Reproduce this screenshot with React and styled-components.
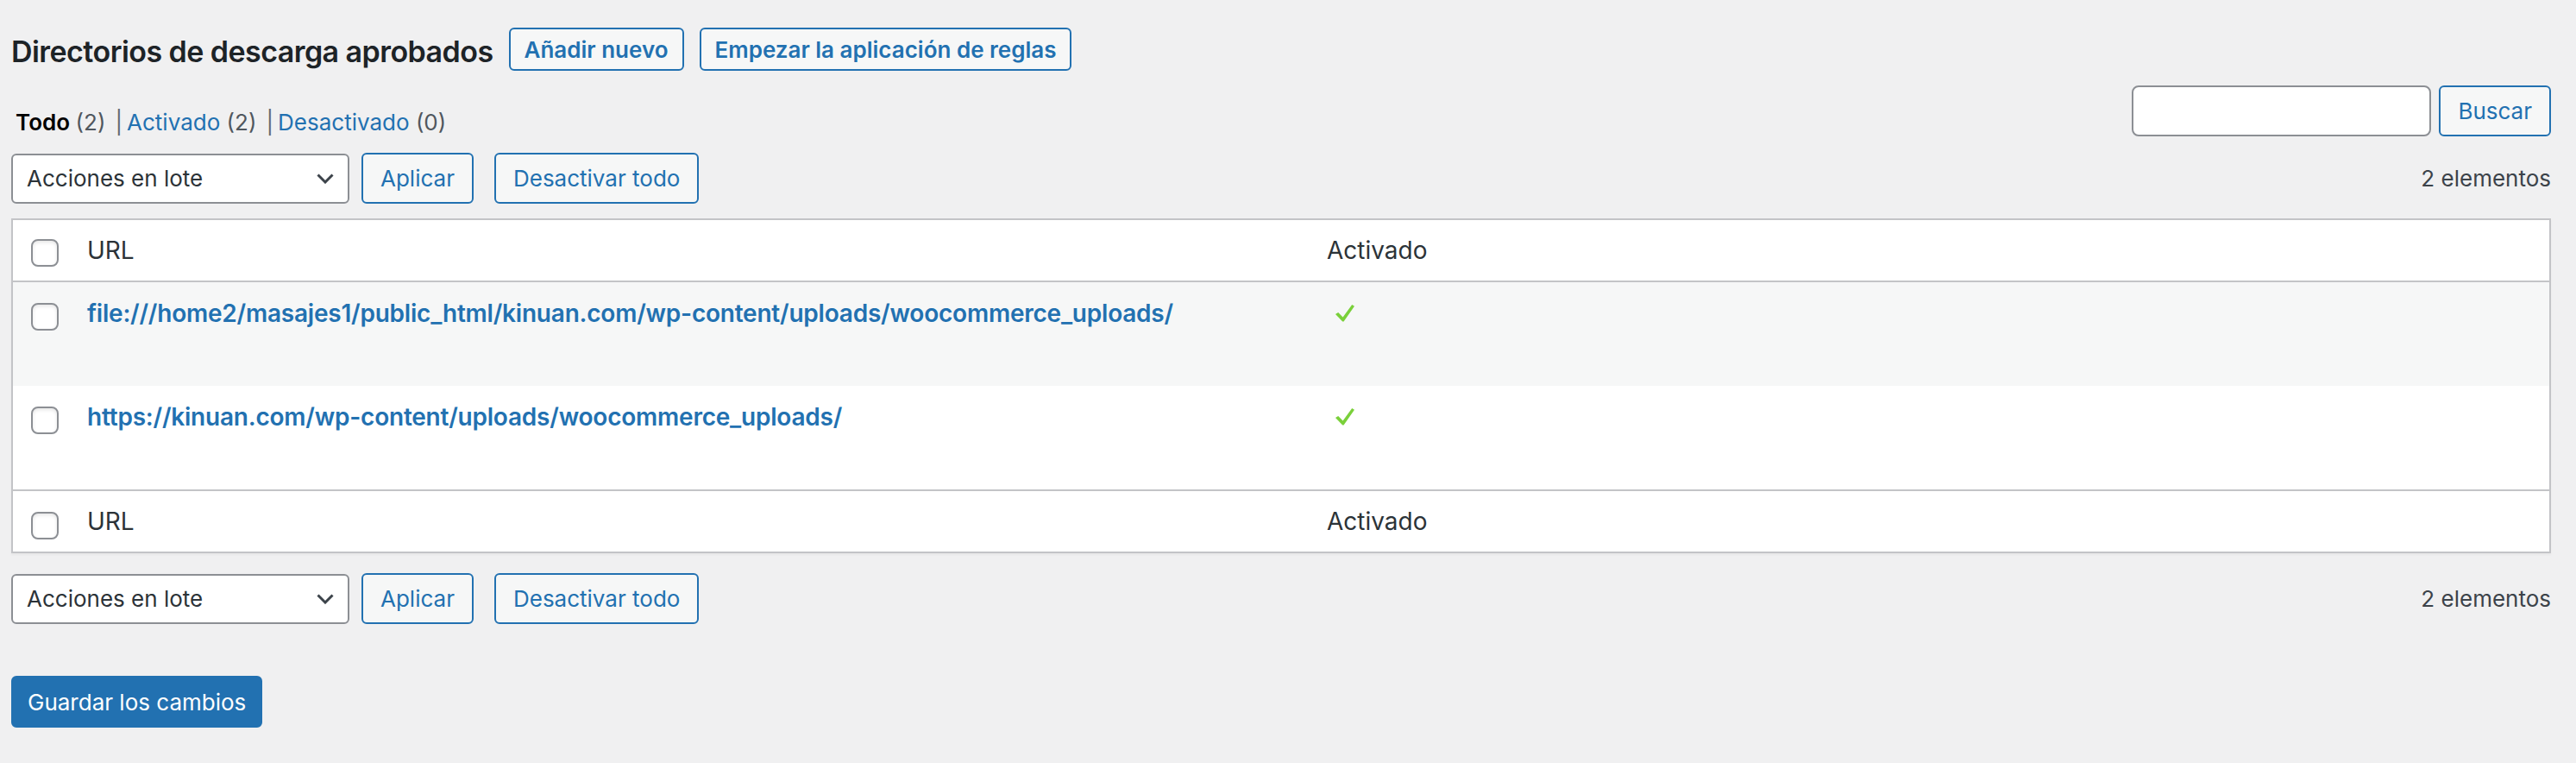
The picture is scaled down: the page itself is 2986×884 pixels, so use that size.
import React from "react";
import styled, { createGlobalStyle } from "styled-components";

const GlobalStyle = createGlobalStyle`
  html, body { margin: 0; padding: 0; background: #f0f0f1; }
  body {
    font-family: Inter, "Noto Sans", "Liberation Sans", sans-serif;
    font-size: 26px;
    color: #3c434a;
  }
  * { box-sizing: border-box; }
`;

const Wrap = styled.div`
  padding: 32px 29px 41px 13px;
`;

const TitleRow = styled.div`
  display: flex;
  align-items: flex-start;
  gap: 18px;
  height: 50px;
`;

const Title = styled.h2`
  margin: 0;
  padding-top: 6px;
  font-size: 34px;
  line-height: 44px;
  font-weight: 600;
  letter-spacing: -0.55px;
  color: #1d2327;
  white-space: nowrap;
`;

const PageAction = styled.button`
  height: 50px;
  padding: 0 16px;
  border: 2px solid #2271b1;
  border-radius: 6px;
  background: #f6f7f7;
  color: #2271b1;
  font-family: inherit;
  font-size: 26px;
  font-weight: 600;
  cursor: pointer;
  white-space: nowrap;
`;

const FilterBar = styled.div`
  display: flex;
  justify-content: space-between;
  align-items: flex-end;
  margin-top: 17px;
`;

const SubSub = styled.ul`
  display: flex;
  margin: 0;
  padding: 0 0 0 5px;
  list-style: none;
  line-height: 32px;
  color: #50575e;
`;

const SubItem = styled.li`
  display: flex;
  white-space: pre;
`;

const SubLink = styled.a`
  color: ${(p) => (p.$current ? "#000" : "#2271b1")};
  font-weight: ${(p) => (p.$current ? 600 : 400)};
  text-decoration: none;
`;

const Count = styled.span`
  color: #50575e;
  font-weight: 400;
`;

const Sep = styled.span`
  margin: 0 5px 0 11px;
  color: #646970;
`;

const SearchBox = styled.div`
  display: flex;
  gap: 9px;
`;

const SearchInput = styled.input`
  width: 347px;
  height: 59px;
  border: 2px solid #8c8f94;
  border-radius: 8px;
  background: #fff;
  padding: 0 16px;
  font-family: inherit;
  font-size: 26px;
  outline: none;
`;

const Button = styled.button`
  height: ${(p) => p.$h || 59}px;
  padding: 0 20px;
  margin-left: ${(p) => p.$ml || 0}px;
  border: 2px solid #2271b1;
  border-radius: 6px;
  background: #f6f7f7;
  color: #2271b1;
  font-family: inherit;
  font-size: 26px;
  font-weight: 400;
  cursor: pointer;
  white-space: nowrap;
`;

const PrimaryButton = styled(Button)`
  height: 60px;
  padding: 0 17px;
  background: #2271b1;
  color: #fff;
`;

const TableNav = styled.div`
  display: flex;
  align-items: center;
  margin-top: ${(p) => p.$mt}px;
`;

const Select = styled.div`
  width: 392px;
  height: 58px;
  border: 2px solid #8c8f94;
  border-radius: 6px;
  background: #fff;
  padding: 0 16px;
  display: flex;
  align-items: center;
  justify-content: space-between;
  color: #2c3338;
  font-size: 26px;
`;

const DisplayingNum = styled.span`
  margin-left: auto;
  color: #3c434a;
`;

const Table = styled.table`
  width: 100%;
  margin-top: 17px;
  border: 2px solid #c3c4c7;
  border-spacing: 0;
  border-collapse: separate;
  table-layout: fixed;
  background: #fff;
  box-shadow: 0 2px 2px rgba(0, 0, 0, 0.04);
`;

const HeadCell = styled.th`
  text-align: left;
  vertical-align: top;
  padding: 16px 20px;
  height: ${(p) => (p.$foot ? 70 : 72)}px;
  font-size: 28px;
  line-height: 38px;
  font-weight: 400;
  color: #2c3338;
  border-bottom: ${(p) => (p.$foot ? "none" : "2px solid #c3c4c7")};
  border-top: ${(p) => (p.$foot ? "2px solid #c3c4c7" : "none")};
`;

const CheckCell = styled.th`
  width: 66px;
  vertical-align: top;
  padding: ${(p) => p.$pt}px 0 0 21px;
  border-bottom: ${(p) => (p.$head ? "2px solid #c3c4c7" : "none")};
  border-top: ${(p) => (p.$foot ? "2px solid #c3c4c7" : "none")};
`;

const Check = styled.input.attrs({ type: "checkbox" })`
  appearance: none;
  display: block;
  margin: 0;
  width: 32px;
  height: 32px;
  border: 2px solid #8c8f94;
  border-radius: 8px;
  background: #fff;
  box-shadow: inset 0 2px 4px rgba(0, 0, 0, 0.1);
`;

const Row = styled.tr`
  height: 120px;
  background: ${(p) => (p.$alt ? "#f6f7f7" : "#fff")};
`;

const Cell = styled.td`
  vertical-align: top;
  padding: 15px 20px;
  font-size: 28px;
  line-height: 42px;
`;

const RowTitle = styled.a`
  color: #2271b1;
  font-weight: 600;
  letter-spacing: -0.22px;
  text-decoration: none;
`;

const YesIcon = styled.svg`
  display: block;
  margin: 11px 0 0 10px;
`;

const Footer = styled.div`
  margin-top: 60px;
`;

const Chevron = () => (
  <svg width="20" height="12" viewBox="0 0 20 12">
    <path d="M1.5 1.5 L10 10 L18.5 1.5" fill="none" stroke="#3c434a" strokeWidth="3" />
  </svg>
);

const Yes = () => (
  <YesIcon width="22" height="20" viewBox="0 0 22 20">
    <polygon points="0,11 3.2,9 8.6,14.6 19.2,0 22,1.8 9.6,19.6 8.2,19.6" fill="#7ad03a" />
  </YesIcon>
);

const BulkNav = ({ mt }) => (
  <TableNav $mt={mt}>
    <Select>
      <span>Acciones en lote</span>
      <Chevron />
    </Select>
    <Button $ml={14}>Aplicar</Button>
    <Button $ml={24}>Desactivar todo</Button>
    <DisplayingNum>2 elementos</DisplayingNum>
  </TableNav>
);

const rows = [
  "file:///home2/masajes1/public_html/kinuan.com/wp-content/uploads/woocommerce_uploads/",
  "https://kinuan.com/wp-content/uploads/woocommerce_uploads/",
];

export default function App() {
  return (
    <>
      <GlobalStyle />
      <Wrap>
        <TitleRow>
          <Title>Directorios de descarga aprobados</Title>
          <PageAction>Añadir nuevo</PageAction>
          <PageAction>Empezar la aplicación de reglas</PageAction>
        </TitleRow>

        <FilterBar>
          <SubSub>
            <SubItem>
              <SubLink $current>
                Todo <Count>(2)</Count>
              </SubLink>
              <Sep>|</Sep>
            </SubItem>
            <SubItem>
              <SubLink>
                Activado <Count>(2)</Count>
              </SubLink>
              <Sep>|</Sep>
            </SubItem>
            <SubItem>
              <SubLink>
                Desactivado <Count>(0)</Count>
              </SubLink>
            </SubItem>
          </SubSub>
          <SearchBox>
            <SearchInput />
            <Button>Buscar</Button>
          </SearchBox>
        </FilterBar>

        <BulkNav mt={19} />

        <Table>
          <colgroup>
            <col style={{ width: 66 }} />
            <col />
            <col />
          </colgroup>
          <thead>
            <tr>
              <CheckCell $pt={22} $head>
                <Check />
              </CheckCell>
              <HeadCell>URL</HeadCell>
              <HeadCell>Activado</HeadCell>
            </tr>
          </thead>
          <tbody>
            {rows.map((url, i) => (
              <Row key={url} $alt={i % 2 === 0}>
                <CheckCell $pt={24}>
                  <Check />
                </CheckCell>
                <Cell>
                  <RowTitle href="#">{url}</RowTitle>
                </Cell>
                <Cell>
                  <Yes />
                </Cell>
              </Row>
            ))}
          </tbody>
          <tfoot>
            <tr>
              <CheckCell $pt={24} $foot>
                <Check />
              </CheckCell>
              <HeadCell $foot>URL</HeadCell>
              <HeadCell $foot>Activado</HeadCell>
            </tr>
          </tfoot>
        </Table>

        <BulkNav mt={23} />

        <Footer>
          <PrimaryButton>Guardar los cambios</PrimaryButton>
        </Footer>
      </Wrap>
    </>
  );
}
